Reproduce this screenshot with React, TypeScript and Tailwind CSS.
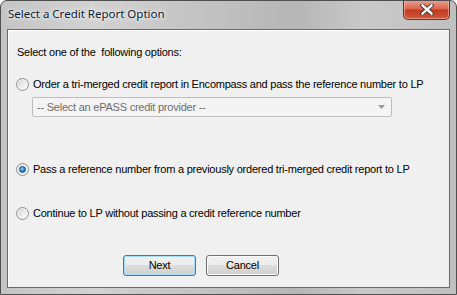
const Radio = ({ checked }: { checked?: boolean }) => (
    <span className="relative flex h-[13px] w-[13px] shrink-0 items-center justify-center rounded-full border border-[#8f8f8f] bg-[linear-gradient(135deg,#cfcfcf,#f4f4f4_70%,#ffffff)] shadow-[inset_0_0_0_1px_#f4f4f4]">
        {checked && (
            <span className="h-[7px] w-[7px] rounded-full border border-[#1c4f86] bg-[radial-gradient(circle_at_40%_35%,#9ed8ff,#2a8ad8_50%,#0d4a8c)]" />
        )}
    </span>
);

export default function App() {
    return (
        <div
            className="box-border h-[295px] w-[457px] overflow-hidden rounded-t-[7px] border border-[#4f4f4f] bg-[linear-gradient(90deg,#c4c4c4,#d2d2d2_20%,#c2c2c2_45%,#b6b6b6_65%,#c9c9c9_80%,#bfbfbf)] px-[6px] text-black"
            style={{ fontFamily: '"Liberation Sans", Arial, sans-serif' }}
        >
            {/* Title bar */}
            <div className="flex h-[28px] items-start">
                <span
                    className="mt-[5px] ml-[1px] text-[11.5px] leading-[16px] text-[#0b1a33] [text-shadow:0_0_6px_#ffffff,0_0_3px_#ffffff]"
                    style={{ fontFamily: '"Noto Sans", "Open Sans", sans-serif' }}
                >
                    Select a Credit Report Option
                </span>
                <div className="ml-auto -mt-[1px] flex h-[20px] w-[47px] items-center justify-center rounded-b-[5px] border border-t-0 border-[#6a2f26] bg-[linear-gradient(180deg,#eba594,#d9674e_45%,#c23a22_55%,#d25a3a)] shadow-[inset_0_0_0_1px_rgba(255,210,200,0.5)]">
                    <svg width="14" height="11" viewBox="0 0 14 11">
                        <path d="M2.5 1.5 L11.5 9.5 M11.5 1.5 L2.5 9.5" stroke="#3d2a28" strokeWidth="4.2" strokeLinecap="square" />
                        <path d="M2.5 1.5 L11.5 9.5 M11.5 1.5 L2.5 9.5" stroke="#ffffff" strokeWidth="2.4" strokeLinecap="square" />
                    </svg>
                </div>
            </div>

            {/* Client area */}
            <div className="box-border h-[259px] w-[443px] border border-[#6b6b6b] bg-[#f0f0f0] text-[11px] leading-[13px] tracking-[-0.23px] shadow-[inset_1px_1px_0_#ffffff]">
                <div className="flex flex-col pl-[9px] pt-[16px]">
                    <p className="h-[13px]">Select one of the&nbsp; following options:</p>

                    <label className="mt-[19px] -ml-[1px] flex h-[13px] items-center gap-[4px]">
                        <Radio />
                        <span>Order a tri-merged credit report in Encompass and pass the reference number to LP</span>
                    </label>

                    <div className="mt-[6px] ml-[15px] flex h-[20px] w-[360px] items-center rounded-[2px] border border-[#bdbdbd] bg-[#f4f4f4] pl-[4px] pr-[6px] text-[#6d6d6d]">
                        <span className="flex-1">-- Select an ePASS credit provider --</span>
                        <svg width="7" height="4" viewBox="0 0 7 4">
                            <path d="M0 0 H7 L3.5 4 Z" fill="#9b9b9b" />
                        </svg>
                    </div>

                    <label className="mt-[46px] -ml-[1px] flex h-[13px] items-center gap-[4px]">
                        <Radio checked />
                        <span>Pass a reference number from a previously ordered tri-merged credit report to LP</span>
                    </label>

                    <label className="mt-[31px] -ml-[1px] flex h-[13px] items-center gap-[4px]">
                        <Radio />
                        <span>Continue to LP without passing a credit reference number</span>
                    </label>

                    <div className="mt-[35px] ml-[106px] flex gap-[10px]">
                        <button className="h-[21px] w-[73px] rounded-[3px] border border-[#3d7bad] bg-[linear-gradient(180deg,#f2f2f2,#ebebeb_45%,#dddddd_50%,#cfcfcf)] text-[11px] shadow-[inset_0_0_0_1px_#a9dcf6]">
                            Next
                        </button>
                        <button className="h-[21px] w-[73px] rounded-[3px] border border-[#707070] bg-[linear-gradient(180deg,#f2f2f2,#ebebeb_45%,#dddddd_50%,#cfcfcf)] text-[11px] shadow-[inset_0_0_0_1px_#fcfcfc]">
                            Cancel
                        </button>
                    </div>
                </div>
            </div>
        </div>
    );
}
